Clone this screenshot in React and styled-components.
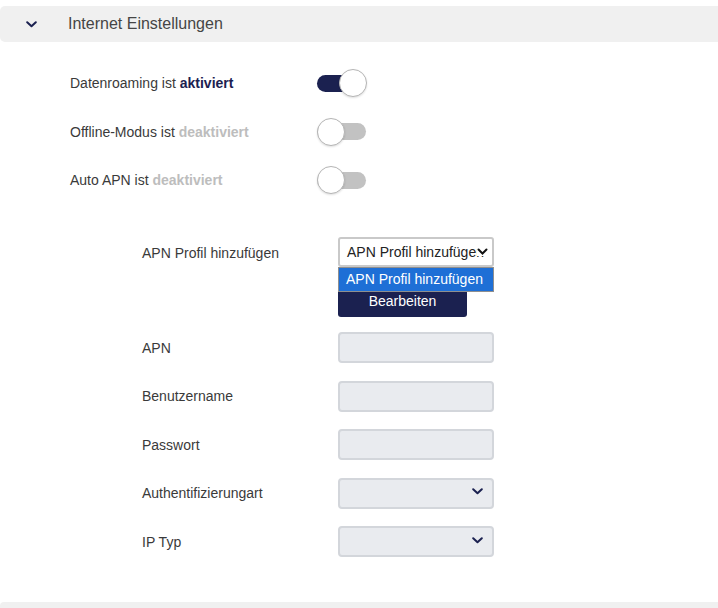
import React from "react";
import styled, { createGlobalStyle } from "styled-components";

const Global = createGlobalStyle`
  html, body { margin: 0; padding: 0; background: #fff; }
  body { font-family: "Liberation Sans", Arial, sans-serif; color: #3a3a3a; }
  * { box-sizing: border-box; }
`;

const Page = styled.div`
  width: 718px;
  height: 608px;
  overflow: hidden;
  padding-top: 6px;
  display: flex;
  flex-direction: column;
  & > * { flex-shrink: 0; }
`;

const SectionHeader = styled.div`
  height: 36px;
  background: #f0f0f0;
  border-radius: 5px 0 0 5px;
  display: flex;
  align-items: center;
  padding-left: 26px;
  gap: 31px;
`;

const HeaderTitle = styled.span`
  font-size: 16px;
  color: #454545;
`;

const ToggleList = styled.div`
  margin-top: 17px;
  padding-left: 70px;
  display: flex;
  flex-direction: column;
`;

const ToggleRow = styled.div`
  height: 48.5px;
  display: grid;
  grid-template-columns: 247px 50px;
  align-items: center;
`;

const RowLabel = styled.span`
  font-size: 14px;
  color: #3a3a3a;
`;

const State = styled.b`
  color: ${(p) => (p.$on ? "#1b2150" : "#bdbdbd")};
`;

const Track = styled.div`
  position: relative;
  width: 49px;
  height: 17px;
  border-radius: 9px;
  background: ${(p) => (p.$on ? "#1b2150" : "#c2c2c2")};
`;

const Thumb = styled.div`
  position: absolute;
  top: 50%;
  ${(p) => (p.$on ? "right: -1px;" : "left: 0;")}
  width: 28px;
  height: 28px;
  margin-top: -14px;
  border-radius: 50%;
  background: #fff;
  border: 1px solid #b5b5b5;
  box-shadow: 0 1px 2px rgba(0, 0, 0, 0.12);
`;

const Form = styled.div`
  margin-top: 32px;
  padding-left: 142px;
  display: flex;
  flex-direction: column;
`;

const FieldRow = styled.div`
  height: 48.5px;
  display: grid;
  grid-template-columns: 196px 156px;
  align-items: center;
`;

const ProfileRow = styled.div`
  display: grid;
  grid-template-columns: 196px 156px;
  align-items: start;
  margin-bottom: 7px;
`;

const ProfileLabel = styled(RowLabel)`
  margin-top: 8px;
`;

const ProfileControl = styled.div`
  position: relative;
  display: flex;
  flex-direction: column;
  align-items: flex-start;
`;

const SelectBox = styled.div`
  position: relative;
  width: 156px;
  height: 30px;
  border: 2px solid #c9c9c9;
  border-radius: 3px;
  background: #fff;
  display: flex;
  align-items: center;
  padding-left: 7px;
  overflow: hidden;
  font-size: 14px;
  color: #222;
  white-space: nowrap;
`;

const SelectArrow = styled.svg`
  position: absolute;
  right: 4px;
  top: 50%;
  margin-top: -4px;
  background: #fff;
`;

const OptionList = styled.div`
  position: absolute;
  left: 0;
  top: 30px;
  width: 156px;
  border: 1px solid #8f8f8f;
  background: #fff;
  z-index: 2;
`;

const Option = styled.div`
  height: 23px;
  display: flex;
  align-items: center;
  padding-left: 7px;
  font-size: 14px;
  color: ${(p) => (p.$active ? "#fff" : "#222")};
  background: ${(p) => (p.$active ? "#1e6fd6" : "#fff")};
  white-space: nowrap;
`;

const EditButton = styled.button`
  margin-top: 19px;
  width: 129px;
  height: 31px;
  border: none;
  border-radius: 3px;
  background: #1b2150;
  color: #fff;
  font-family: "Liberation Sans", Arial, sans-serif;
  font-size: 14px;
  padding: 0 0 1px 0;
  display: flex;
  align-items: center;
  justify-content: center;
`;

const Input = styled.div`
  position: relative;
  width: 156px;
  height: 31px;
  border: 2px solid #d3d6db;
  border-radius: 4px;
  background: #e9ebef;
`;

const Chevron = ({ color = "#1b2150", w = 11 }) => (
  <svg width={w} height="7" viewBox="0 0 11 7" fill="none">
    <path d="M1.2 1.2 L5.5 5.3 L9.8 1.2" stroke={color} strokeWidth="2" strokeLinecap="round" strokeLinejoin="round" />
  </svg>
);

const InputChevron = styled.span`
  position: absolute;
  right: 9px;
  top: 50%;
  margin-top: -5px;
  display: flex;
`;

const toggles = [
  { label: "Datenroaming ist", on: true },
  { label: "Offline-Modus ist", on: false },
  { label: "Auto APN ist", on: false },
];

const fields = [
  { label: "APN", select: false },
  { label: "Benutzername", select: false },
  { label: "Passwort", select: false },
  { label: "Authentifizierungart", select: true },
  { label: "IP Typ", select: true },
];

const BottomBar = styled.div`
  margin-top: 36px;
  height: 20px;
  background: #f0f0f0;
  border-radius: 4px 0 0 0;
`;

export default function App() {
  return (
    <>
      <Global />
      <Page>
        <SectionHeader>
          <Chevron />
          <HeaderTitle>Internet Einstellungen</HeaderTitle>
        </SectionHeader>

        <ToggleList>
          {toggles.map((t) => (
            <ToggleRow key={t.label}>
              <RowLabel>
                {t.label} <State $on={t.on}>{t.on ? "aktiviert" : "deaktiviert"}</State>
              </RowLabel>
              <Track $on={t.on}>
                <Thumb $on={t.on} />
              </Track>
            </ToggleRow>
          ))}
        </ToggleList>

        <Form>
          <ProfileRow>
            <ProfileLabel>APN Profil hinzufügen</ProfileLabel>
            <ProfileControl>
              <SelectBox>
                APN Profil hinzufügen
                <SelectArrow width="11" height="8" viewBox="0 0 11 8">
                  <path d="M1.5 1.5 L5.5 5.5 L9.5 1.5" stroke="#111" strokeWidth="2" fill="none" strokeLinecap="round" />
                </SelectArrow>
              </SelectBox>
              <OptionList>
                <Option $active>APN Profil hinzufügen</Option>
              </OptionList>
              <EditButton>Bearbeiten</EditButton>
            </ProfileControl>
          </ProfileRow>

          {fields.map((f) => (
            <FieldRow key={f.label}>
              <RowLabel>{f.label}</RowLabel>
              <Input>
                {f.select && (
                  <InputChevron>
                    <Chevron />
                  </InputChevron>
                )}
              </Input>
            </FieldRow>
          ))}
        </Form>

        <BottomBar />
      </Page>
    </>
  );
}
